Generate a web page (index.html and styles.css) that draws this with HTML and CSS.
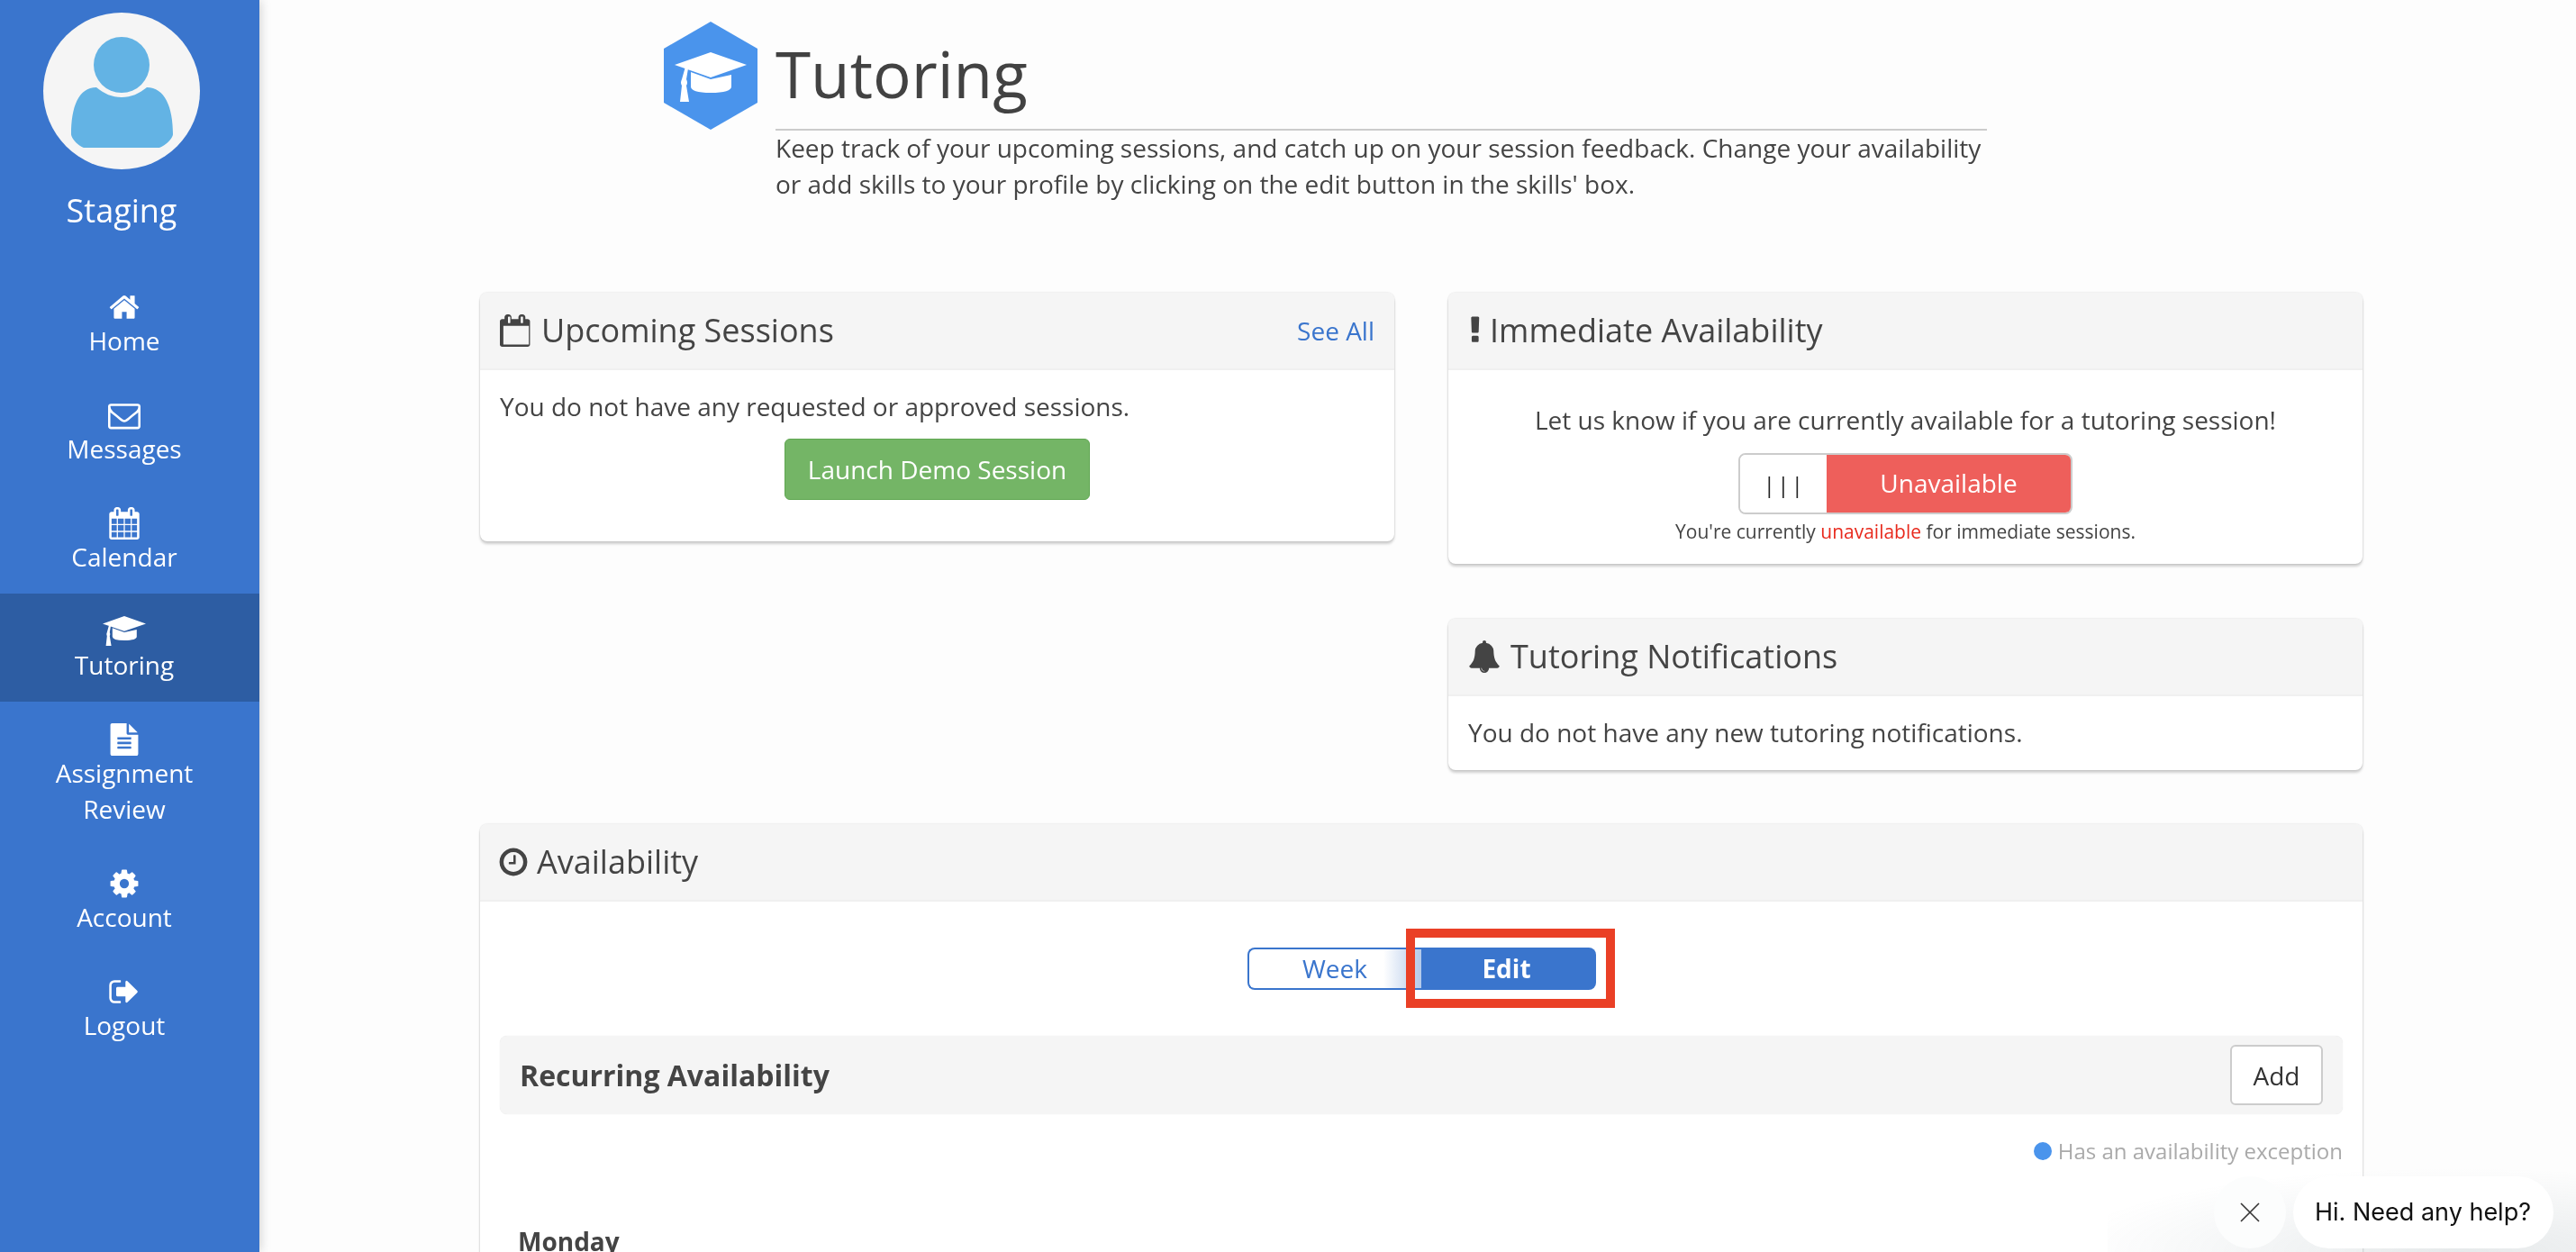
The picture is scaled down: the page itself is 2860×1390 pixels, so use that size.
FILE: index.html
```html
<!DOCTYPE html>
<html lang="en">
<head>
<meta charset="utf-8">
<title>Tutoring</title>
<link rel="stylesheet" href="styles.css">
</head>
<body>
<div class="app">
  <aside class="sidebar">
    <div class="profile">
      <div class="avatar">
        <svg viewBox="0 0 174 174" class="avatar-svg"><circle cx="87" cy="58" r="31"/><path d="M59 83C68 90 76 94 87 94C98 94 106 90 115 83C135 83 144 105 144 135C144 140 133 150 128 150L46 150C41 150 31 140 31 135C31 105 39 83 59 83Z"/></svg>
      </div>
      <div class="profile-name">Staging</div>
    </div>
    <nav class="nav">
      <a class="nav-item"><span class="nav-icon"><svg class="fa" viewBox="0 0 1792 1792"><path d="M1472 992v480q0 26-19 45t-45 19h-384v-384h-256v384h-384q-26 0-45-19t-19-45v-480q0-1 .5-3t.5-3l575-474 575 474q1 2 1 6zm223-69l-62 74q-8 9-21 11h-3q-13 0-21-7l-692-577-692 577q-12 8-24 7-13-2-21-11l-62-74q-8-10-7-23.5t11-21.5l719-599q32-26 76-26t76 26l244 204v-195q0-14 9-23t23-9h192q14 0 23 9t9 23v408l219 182q10 8 11 21.5t-7 23.5z"/></svg></span><span>Home</span></a>
      <a class="nav-item"><span class="nav-icon"><svg class="fa" viewBox="0 0 1792 1792"><path d="M1664 1504v-768q-32 36-69 66-268 206-426 338-51 43-83 67t-86.5 48.5-102.5 24.5h-2q-48 0-102.5-24.5t-86.5-48.5-83-67q-158-132-426-338-37-30-69-66v768q0 13 9.5 22.5t22.5 9.5h1472q13 0 22.5-9.5t9.5-22.5zm0-1051v-24.5l-.5-13-3-12.5-5.5-9-9-7.5-14-2.5h-1472q-13 0-22.5 9.5t-9.5 22.5q0 168 147 284 193 152 401 317 6 5 35 29.5t46 37.5 44.5 31.5 50.5 27.5 43 9h2q20 0 43-9t50.5-27.5 44.5-31.5 46-37.5 35-29.5q208-165 401-317 54-43 100.5-115.5t46.5-131.5zm128-37v1088q0 66-47 113t-113 47h-1472q-66 0-113-47t-47-113v-1088q0-66 47-113t113-47h1472q66 0 113 47t47 113z"/></svg></span><span>Messages</span></a>
      <a class="nav-item"><span class="nav-icon"><svg class="fa" viewBox="0 0 1792 1792"><path d="M192 1664h288v-288h-288v288zm352 0h320v-288h-320v288zm-352-352h288v-320h-288v320zm352 0h320v-320h-320v320zm-352-384h288v-288h-288v288zm736 736h320v-288h-320v288zm-384-736h320v-288h-320v288zm768 736h288v-288h-288v288zm-384-352h320v-320h-320v320zm-352-864v-288q0-13-9.5-22.5t-22.5-9.5h-64q-13 0-22.5 9.5t-9.5 22.5v288q0 13 9.5 22.5t22.5 9.5h64q13 0 22.5-9.5t9.5-22.5zm736 864h288v-320h-288v320zm-384-384h320v-288h-320v288zm384 0h288v-288h-288v288zm32-480v-288q0-13-9.5-22.5t-22.5-9.5h-64q-13 0-22.5 9.5t-9.5 22.5v288q0 13 9.5 22.5t22.5 9.5h64q13 0 22.5-9.5t9.5-22.5zm384-64v1280q0 52-38 90t-90 38h-1408q-52 0-90-38t-38-90v-1280q0-52 38-90t90-38h128v-96q0-66 47-113t113-47h64q66 0 113 47t47 113v96h384v-96q0-66 47-113t113-47h64q66 0 113 47t47 113v96h128q52 0 90 38t38 90z"/></svg></span><span>Calendar</span></a>
      <a class="nav-item active"><span class="nav-icon"><svg class="fa fa-wide" viewBox="12 34 80 55"><path d="M52 34L92 48L52 62L12 48Z"/><path d="M30 56L52 64L75 59L75 72Q75 79 52 79Q30 79 30 72Z"/><path d="M24 50L27 52L25 64Q27 68 25 71L28 89L18 89L20 71Q18 68 20 64Z"/></svg></span><span>Tutoring</span></a>
      <a class="nav-item"><span class="nav-icon"><svg class="fa" viewBox="0 0 1792 1792"><path d="M1596 476q14 14 28 36h-472v-472q22 14 36 28zm-476 164h544v1056q0 40-28 68t-68 28h-1344q-40 0-68-28t-28-68v-1600q0-40 28-68t68-28h800v544q0 40 28 68t68 28zm160 736v-64q0-14-9-23t-23-9h-704q-14 0-23 9t-9 23v64q0 14 9 23t23 9h704q14 0 23-9t9-23zm0-256v-64q0-14-9-23t-23-9h-704q-14 0-23 9t-9 23v64q0 14 9 23t23 9h704q14 0 23-9t9-23zm0-256v-64q0-14-9-23t-23-9h-704q-14 0-23 9t-9 23v64q0 14 9 23t23 9h704q14 0 23-9t9-23z"/></svg></span><span>Assignment<br>Review</span></a>
      <a class="nav-item"><span class="nav-icon"><svg class="fa" viewBox="0 0 1792 1792"><path d="M1152 896q0-106-75-181t-181-75-181 75-75 181 75 181 181 75 181-75 75-181zm512-109v222q0 12-8 23t-20 13l-185 28q-19 54-39 91 35 50 107 138 10 12 10 25t-9 23q-27 37-99 108t-94 71q-12 0-26-9l-138-108q-44 23-91 38-16 136-29 186-7 28-36 28h-222q-14 0-24.5-8.5t-11.5-21.5l-28-184q-49-16-90-37l-141 107q-10 9-25 9-14 0-25-11-126-114-165-168-7-10-7-23 0-12 8-23 15-21 51-66.5t54-70.5q-27-50-41-99l-183-27q-13-2-21-12.5t-8-23.5v-222q0-12 8-23t19-13l186-28q14-46 39-92-40-57-107-138-10-12-10-24 0-10 9-23 26-36 98.5-107.5t94.5-71.5q13 0 26 10l138 107q44-23 91-38 16-136 29-186 7-28 36-28h222q14 0 24.5 8.5t11.5 21.5l28 184q49 16 90 37l142-107q9-9 24-9 13 0 25 10 129 119 165 170 7 8 7 22 0 12-8 23-15 21-51 66.5t-54 70.5q26 50 41 98l183 28q13 2 21 12.5t8 23.5z"/></svg></span><span>Account</span></a>
      <a class="nav-item"><span class="nav-icon"><svg class="fa" viewBox="0 0 1792 1792"><path d="M704 1440q0 4 1 20t.5 26.5-3 23.5-10 19.5-20.5 6.5h-320q-119 0-203.5-84.5t-84.5-203.5v-704q0-119 84.5-203.5t203.5-84.5h320q13 0 22.5 9.5t9.5 22.5q0 4 1 20t.5 26.5-3 23.5-10 19.5-20.5 6.5h-320q-66 0-113 47t-47 113v704q0 66 47 113t113 47h312l11.5 1 11.5 3 8 5.5 7 9 2 13.5zm928-544q0 26-19 45l-544 544q-19 19-45 19t-45-19-19-45v-288h-448q-26 0-45-19t-19-45v-384q0-26 19-45t45-19h448v-288q0-26 19-45t45-19 45 19l544 544q19 19 19 45z"/></svg></span><span>Logout</span></a>
    </nav>
  </aside>

  <main class="main">
    <header class="page-head">
      <svg class="hex" viewBox="0 0 104 120"><polygon class="hex-bg" points="52,0 104,30 104,90 52,120 0,90 0,30"/><g class="hex-cap"><path d="M52 34L92 48L52 62L12 48Z"/><path d="M30 56L52 64L75 59L75 72Q75 79 52 79Q30 79 30 72Z"/><path d="M24 50L27 52L25 64Q27 68 25 71L28 89L18 89L20 71Q18 68 20 64Z"/></g></svg>
      <div class="head-text">
        <h1 class="page-title">Tutoring</h1>
        <p class="page-desc">Keep track of your upcoming sessions, and catch up on your session feedback. Change your availability or add skills to your profile by clicking on the edit button in the skills' box.</p>
      </div>
    </header>

    <div class="cards">
      <section class="card card-upcoming">
        <div class="card-head">
          <h2 class="card-title"><svg class="ti" viewBox="0 0 1792 1792"><path d="M192 1664h1408v-1024h-1408v1024zm384-1216v-288q0-14-9-23t-23-9h-64q-14 0-23 9t-9 23v288q0 14 9 23t23 9h64q14 0 23-9t9-23zm704 0v-288q0-14-9-23t-23-9h-64q-14 0-23 9t-9 23v288q0 14 9 23t23 9h64q14 0 23-9t9-23zm384-64v1280q0 52-38 90t-90 38h-1408q-52 0-90-38t-38-90v-1280q0-52 38-90t90-38h128v-96q0-66 47-113t113-47h64q66 0 113 47t47 113v96h384v-96q0-66 47-113t113-47h64q66 0 113 47t47 113v96h128q52 0 90 38t38 90z"/></svg>Upcoming Sessions</h2>
          <a class="see-all">See All</a>
        </div>
        <div class="card-body body-upcoming">
          <p class="body-line">You do not have any requested or approved sessions.</p>
          <div class="center"><button class="btn-green">Launch Demo Session</button></div>
        </div>
      </section>

      <div class="right-col">
        <section class="card">
          <div class="card-head">
            <h2 class="card-title gap-small"><svg class="ti ti-ex" viewBox="0 0 640 1792"><path d="M576 1248v224q0 26-19 45t-45 19h-256q-26 0-45-19t-19-45v-224q0-26 19-45t45-19h256q26 0 45 19t19 45zm30-1056l-28 768q-1 26-20.5 45t-45.5 19h-256q-26 0-45.5-19t-20.5-45l-28-768q-1-26 17.5-45t44.5-19h320q26 0 44.5 19t17.5 45z"/></svg>Immediate Availability</h2>
          </div>
          <div class="card-body body-immediate">
            <p class="body-line center">Let us know if you are currently available for a tutoring session!</p>
            <div class="switch">
              <span class="switch-handle">|||</span>
              <span class="switch-label">Unavailable</span>
            </div>
            <p class="switch-note">You're currently <span class="red">unavailable</span> for immediate sessions.</p>
          </div>
        </section>
        <section class="card">
          <div class="card-head">
            <h2 class="card-title title-bell"><svg class="ti" viewBox="0 0 1792 1792"><path d="M912 1696q0-16-16-16-59 0-101.5-42.5t-42.5-101.5q0-16-16-16t-16 16q0 73 51.5 124.5t124.5 51.5q16 0 16-16zm816-288q0 52-38 90t-90 38h-448q0 106-75 181t-181 75-181-75-75-181h-448q-52 0-90-38t-38-90q50-42 91-88t85-119.5 74.5-158.5 50-206 19.5-260q0-152 117-282.5t307-158.5q-8-19-8-39 0-40 28-68t68-28 68 28 28 68q0 20-8 39 190 28 307 158.5t117 282.5q0 139 19.5 260t50 206 74.5 158.5 85 119.5 91 88z"/></svg>Tutoring Notifications</h2>
          </div>
          <div class="card-body body-notif">
            <p class="body-line">You do not have any new tutoring notifications.</p>
          </div>
        </section>
      </div>

      <section class="card card-wide">
        <div class="card-head">
          <h2 class="card-title title-clock"><svg class="ti ti-clock" viewBox="0 0 1792 1792"><path d="M1024 544v448q0 14-9 23t-23 9h-320q-14 0-23-9t-9-23v-64q0-14 9-23t23-9h224v-352q0-14 9-23t23-9h64q14 0 23 9t9 23zm416 352q0-148-73-273t-198-198-273-73-273 73-198 198-73 273 73 273 198 198 273 73 273-73 198-198 73-273zm224 0q0 209-103 385.5t-279.5 279.5-385.5 103-385.5-103-279.5-279.5-103-385.5 103-385.5 279.5-279.5 385.5-103 385.5 103 279.5 279.5 103 385.5z"/></svg>Availability</h2>
        </div>
        <div class="card-body body-avail">
          <div class="toggle-row">
            <div class="toggle">
              <span class="toggle-week">Week</span>
              <span class="toggle-edit">Edit</span>
              <span class="highlight"></span>
            </div>
          </div>
          <div class="recurring">
            <h3 class="recurring-title">Recurring Availability</h3>
            <button class="btn-add">Add</button>
          </div>
          <div class="legend"><span class="legend-dot"></span>Has an availability exception</div>
          <div class="day">Monday</div>
        </div>
      </section>
    </div>
  </main>
</div>

<div class="chat-glow"></div>
<div class="chat">
  <button class="chat-close"><svg viewBox="0 0 22 22" class="chat-x"><path d="M1 1L21 21M21 1L1 21"/></svg></button>
  <div class="chat-pill">Hi. Need any help?</div>
</div>
</body>
</html>
```

FILE: styles.css
```css
* { box-sizing: border-box; }
html, body { margin: 0; height: 100%; overflow: hidden; }
body {
  background: #fdfdfd;
  color: #444;
  font-family: "Open Sans", "Liberation Sans", sans-serif;
  font-size: 28px;
  line-height: 40px;
}
h1, h2, h3, p { margin: 0; font-weight: 400; }

.app { display: flex; height: 1390px; will-change: transform; }

/* Sidebar */
.sidebar {
  width: 288px;
  flex: none;
  background: #3a75cd;
  color: #fff;
  box-shadow: 0 0 12px rgba(0,0,0,.22);
}
.profile {
  display: flex;
  flex-direction: column;
  align-items: center;
  padding: 14px 18px 0 0;
  height: 299px;
}
.avatar {
  width: 174px;
  height: 174px;
  border-radius: 50%;
  background: #f5f5f5;
}
.avatar-svg { display: block; width: 174px; height: 174px; fill: #63b3e4; }
.profile-name { margin-top: 21px; font-size: 36px; line-height: 50px; }
.nav { display: flex; flex-direction: column; }
.nav-item {
  display: flex;
  flex-direction: column;
  align-items: center;
  padding: 20px 12px 21px 0;
  text-align: center;
}
.nav-item.active { background: #2d5da3; }
.nav-icon { display: flex; justify-content: center; align-items: flex-start; height: 39px; }
.fa { display: block; width: 36px; height: 36px; margin-top: 4px; fill: #fff; }
.fa-wide { width: 48px; height: 33px; margin-top: 5px; }

/* Page head */
.main { flex: 1; padding-left: 245px; padding-right: 236px; min-width: 0; }
.page-head { display: flex; gap: 20px; padding: 24px 0 0 204px; height: 325px; }
.hex { width: 104px; height: 120px; flex: none; }
.hex-bg { fill: #4a94ec; }
.hex-cap { fill: #fff; }
.head-text { width: 1345px; }
.page-title {
  height: 121px;
  padding-top: 9px;
  font-size: 71px;
  line-height: 98px;
  color: #424242;
  border-bottom: 2px solid #ccc;
}
.page-desc { line-height: 40px; margin-top: -1px; }

/* Cards */
.cards {
  display: grid;
  grid-template-columns: 1015px 1015px;
  column-gap: 60px;
  row-gap: 60px;
  align-items: start;
}
.right-col { display: flex; flex-direction: column; gap: 61px; }
.card {
  background: #fff;
  border-radius: 8px;
  box-shadow: 0 0 2px rgba(0,0,0,.18), 0 3px 3px rgba(0,0,0,.18);
  overflow: hidden;
}
.card-wide { grid-column: 1 / 3; height: 600px; }
.card-head {
  display: flex;
  align-items: center;
  justify-content: space-between;
  height: 86px;
  padding: 0 22px;
  background: #f5f5f5;
  border-bottom: 2px solid #f0f0f0;
}
.card-title { display: flex; align-items: center; gap: 10px; font-size: 36px; line-height: 50px; color: #444; }
.gap-small { gap: 11px; }
.title-bell { gap: 11px; }
.title-clock { gap: 8px; }
.ti { width: 36px; height: 36px; fill: #444; flex: none; }
.ti-ex { width: 13px; }
.ti-clock { margin-left: -3px; }
.see-all { color: #3a75cd; }
.card-body { padding: 0 22px; }
.body-upcoming { height: 190px; padding-top: 20px; }
.center { text-align: center; }
.btn-green {
  margin-top: 16px;
  width: 339px;
  height: 68px;
  background: #74b566;
  border: 1px solid #5fa651;
  border-radius: 6px;
  color: #fff;
  font: inherit;
}
.body-immediate { height: 215px; padding-top: 35px; }
.switch {
  display: flex;
  width: 371px;
  height: 68px;
  margin: 17px auto 0;
  border: 2px solid #ccc;
  border-radius: 8px;
  overflow: hidden;
}
.switch-handle { width: 96px; padding-left: 2px; text-align: center; font-size: 24px; line-height: 66px; letter-spacing: 2.3px; background: #fff; color: #222; }
.switch-label { flex: 1; text-align: center; line-height: 62px; background: #ee5f5b; color: #fff; }
.switch-note { text-align: center; font-size: 21px; line-height: 30px; margin-top: 4px; }
.red { color: #e8291c; }
.body-notif { height: 82px; padding-top: 20px; }

/* Availability */
.body-avail { padding-top: 51px; }
.toggle-row { display: flex; justify-content: center; }
.toggle { position: relative; display: flex; width: 387px; height: 47px; }
.toggle-week {
  width: 193px;
  text-align: center;
  line-height: 43px;
  color: #3a75cd;
  background: linear-gradient(90deg, #fff 78%, #b3c9ea 100%);
  border: 2px solid #3a75cd;
  border-right: 0;
  border-radius: 8px 0 0 8px;
}
.toggle-edit {
  flex: 1;
  padding-right: 4px;
  text-align: center;
  line-height: 47px;
  font-weight: 700;
  color: #fff;
  background: #3a75cd;
  border-radius: 0 8px 8px 0;
}
.highlight {
  position: absolute;
  left: 176px;
  top: -21px;
  width: 232px;
  height: 88px;
  border: 10px solid #ea4026;
}
.recurring {
  display: flex;
  align-items: center;
  justify-content: space-between;
  height: 87px;
  margin-top: 51px;
  padding: 0 22px;
  background: #f5f5f5;
  border-radius: 8px;
  box-shadow: 0 0 1px rgba(0,0,0,.12);
}
.recurring-title { font-size: 32px; font-weight: 700; color: #444; }
.btn-add {
  width: 103px;
  height: 67px;
  background: #fff;
  border: 2px solid #ccc;
  border-radius: 6px;
  color: #333;
  font: inherit;
}
.legend {
  display: flex;
  align-items: center;
  justify-content: flex-end;
  gap: 7px;
  margin-top: 21px;
  font-size: 24px;
  line-height: 40px;
  color: #aaa;
}
.legend-dot { width: 20px; height: 20px; border-radius: 50%; background: #4a94ec; }
.day { margin-top: 60px; padding-left: 20px; font-weight: 700; color: #444; }

/* Chat widget */
.chat-glow {
  position: fixed;
  right: 0;
  bottom: 0;
  width: 520px;
  height: 110px;
  background: radial-gradient(ellipse 100% 100% at 75% 100%, rgba(80,105,115,.13), rgba(80,105,115,0) 85%);
  pointer-events: none;
}
.chat { position: fixed; right: 25px; bottom: 4px; display: flex; gap: 8px; align-items: center; will-change: transform; }
.chat-close {
  width: 80px;
  height: 80px;
  padding: 0;
  display: flex;
  align-items: center;
  justify-content: center;
  background: #fcfdfd;
  border: 0;
  border-radius: 50%;
}
.chat-x { width: 22px; height: 22px; fill: none; stroke: #333; stroke-width: 1.6; }
.chat-pill {
  height: 80px;
  width: 289px;
  padding-left: 24px;
  background: #fff;
  border-radius: 40px;
  font-family: Inter, "Liberation Sans", Arial, sans-serif;
  font-size: 27px;
  line-height: 80px;
  color: #111;
}
```
